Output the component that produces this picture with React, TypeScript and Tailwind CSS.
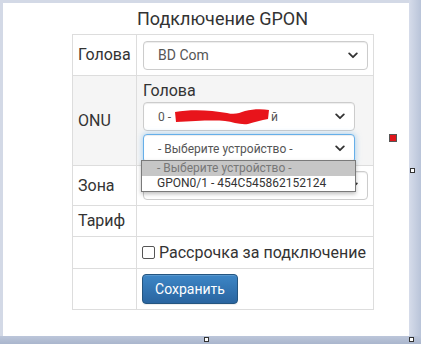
import React from "react";

function Chevron() {
  return (
    <svg width="10" height="7" viewBox="0 0 10 7" className="shrink-0">
      <path d="M1.2 1.4 L5 5.2 L8.8 1.4" fill="none" stroke="#333" strokeWidth="1.8" strokeLinecap="round" strokeLinejoin="round" />
    </svg>
  );
}

function Select({ children, focused = false, w, size = "text-[12px]" }: { children: React.ReactNode; focused?: boolean; w: string; size?: string }) {
  return (
    <div
      className={
        "flex items-center justify-between h-[29px] rounded-[4px] border bg-white pl-[14px] pr-[9px] text-[#555] " +
        size +
        " " +
        w +
        " " +
        (focused
          ? "border-[#66afe9] shadow-[inset_0_1px_1px_rgba(0,0,0,0.075),0_0_6px_rgba(102,175,233,0.6)]"
          : "border-[#ccc] shadow-[inset_0_1px_1px_rgba(0,0,0,0.075)]")
      }
    >
      <div className="flex items-center whitespace-nowrap">{children}</div>
      <Chevron />
    </div>
  );
}

export default function App() {
  return (
    <div
      className="relative w-[421px] h-[344px] bg-[#c9d1e2] overflow-hidden"
      style={{ fontFamily: "Roboto, 'Liberation Sans', sans-serif" }}
    >
      <div className="flex h-[336px]">
        <div className="w-[3px] bg-[#d3d9e6]" />
        <div className="flex flex-col">
          <div className="h-[3px] bg-[#d3d9e6]" />
          <div className="w-[406px] h-[333px] bg-white flex flex-col">
            <div className="ml-[69px] w-[301px] h-[31px] flex items-center justify-center text-[18px] text-[#333]">
              Подключение GPON
            </div>
            <table className="ml-[69px] w-[302px] border-collapse text-[16px] text-[#333]">
              <tbody>
                <tr className="h-[41px]">
                  <td className="w-[64px] border border-[#ddd] pl-[5px]">Голова</td>
                  <td className="border border-[#ddd] pl-[6px]">
                    <Select w="w-[225px]" size="text-[14px]">BD Com</Select>
                  </td>
                </tr>
                <tr className="h-[90px] bg-[#f5f5f5]">
                  <td className="border border-[#ddd] pl-[5px]">ONU</td>
                  <td className="border border-[#ddd] pl-[6px] align-top pt-[5px]">
                    <div className="leading-[19px] mb-[2px]">Голова</div>
                    <Select w="w-[212px]">
                      <span>0 -</span>
                      <svg width="98" height="18" viewBox="0 0 98 18" className="ml-[2px]">
                        <path
                          d="M2 4 C18 1 38 2 54 5 C62 7 66 5 72 3 C80 1 89 1 96 2 L95 11 C88 12 82 14 75 16 C67 17 60 14 52 13 C40 12 22 13 3 14 Z"
                          fill="#e8141b"
                        />
                      </svg>
                      <span>й</span>
                    </Select>
                    <div className="h-[3px]" />
                    <Select w="w-[212px]" focused>
                      - Выберите устройство -
                    </Select>
                  </td>
                </tr>
                <tr className="h-[40px]">
                  <td className="border border-[#ddd] pl-[5px]">Зона</td>
                  <td className="border border-[#ddd] pl-[6px]">
                    <Select w="w-[225px]">&nbsp;</Select>
                  </td>
                </tr>
                <tr className="h-[31px]">
                  <td className="border border-[#ddd] pl-[5px]">Тариф</td>
                  <td className="border border-[#ddd]" />
                </tr>
                <tr className="h-[32px]">
                  <td className="border border-[#ddd]" />
                  <td className="border border-[#ddd] pl-[5px]">
                    <div className="flex items-center gap-[4px]">
                      <div className="w-[13px] h-[13px] rounded-[2px] border border-[#555] bg-white" />
                      <span>Рассрочка за подключение</span>
                    </div>
                  </td>
                </tr>
                <tr className="h-[41px]">
                  <td className="border border-[#ddd]" />
                  <td className="border border-[#ddd] pl-[5px]">
                    <div className="w-[96px] h-[30px] rounded-[4px] border border-[#245580] bg-gradient-to-b from-[#3d86c6] to-[#2a65a0] flex items-center justify-center text-[14px] text-white shadow-[inset_0_1px_0_rgba(255,255,255,0.15),0_1px_1px_rgba(0,0,0,0.075)]">
                      Сохранить
                    </div>
                  </td>
                </tr>
              </tbody>
            </table>
          </div>
        </div>
        <div className="w-[12px] bg-gradient-to-r from-[#d6dcea] to-[#b9c4d9]" />
      </div>
      <div className="h-[8px] bg-gradient-to-b from-[#bcc6da] to-[#aab6cd]" />

      {/* open dropdown list */}
      <div className="absolute left-[141px] top-[160px] w-[215px] h-[32px] border border-[#7a7a7a] bg-white text-[12px] leading-[15px] shadow-[0_2px_4px_rgba(0,0,0,0.25)]">
        <div className="bg-[#c6c6c6] text-[#777] pl-[15px] h-[15px]">- Выберите устройство -</div>
        <div className="text-[#333] pl-[15px] h-[15px]">GPON0/1 - 454C545862152124</div>
      </div>

      {/* editor handles */}
      <div className="absolute left-[389px] top-[134px] w-[8px] h-[8px] bg-[#e0161b] border border-[#555]" />
      <div className="absolute left-[410px] top-[168px] w-[5px] h-[5px] bg-white border border-[#333]" />
      <div className="absolute left-[204px] top-[337px] w-[5px] h-[5px] bg-white border border-[#333]" />
      <div className="absolute left-[409px] top-[337px] w-[5px] h-[5px] bg-white border border-[#333]" />
    </div>
  );
}
